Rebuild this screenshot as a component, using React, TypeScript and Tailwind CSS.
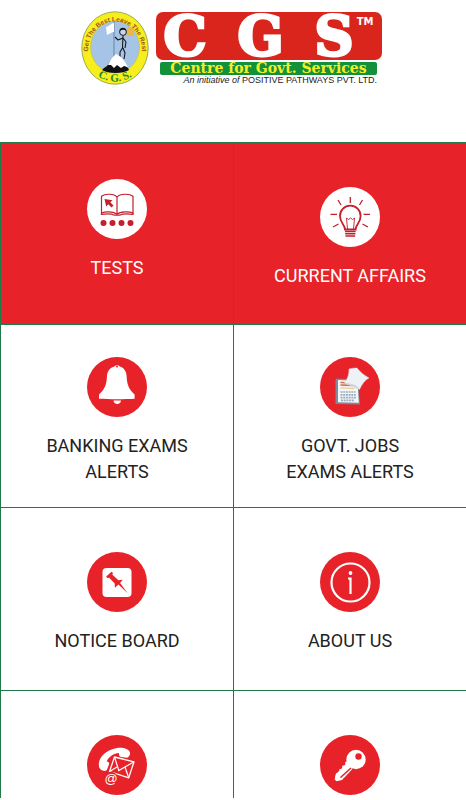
import React from 'react';

const RED = '#e82229';

function Badge() {
  return (
    <svg viewBox="0 0 68 74" className="w-[68px] h-[74px] shrink-0" role="img" aria-label="CGS emblem">
      <defs>
        <path id="motto" d="M 7.5 45 A 27 29 0 1 1 60.5 45" />
        <path id="initials" d="M 6 53 A 32 34 0 0 0 62 53" />
      </defs>
      <ellipse cx="34" cy="37" rx="33.2" ry="36.2" fill="#f6ee1d" stroke="#8fa44a" strokeWidth="0.9" />
      <ellipse cx="34" cy="36" rx="24.5" ry="26" fill="#a5c4e6" stroke="#c9bf3a" strokeWidth="0.6" />
      <circle cx="49" cy="21" r="4.2" fill="#e9b64a" />
      <path d="M42 20h3M43 25l3-1M52 14l-1 4M54 25l-3-2" stroke="#e9b64a" strokeWidth="1" />
      {/* flag and climber */}
      <path d="M33 11v35" stroke="#5b7391" strokeWidth="0.8" />
      <path d="M33 12c-3 0-4 3-8 4l1 8c3-1 4-3 7-3z" fill="#fff" />
      <circle cx="42" cy="21" r="3.4" fill="#c2d8f0" stroke="#151515" strokeWidth="1" />
      <path d="M38.5 20c0-4 6-4.500 7-.5-2-1-4-1-7 .5z" fill="#151515" />
      <path d="M42 25l-.5 12M34 26l3 3 5-2 3 4-1 6M41.500 37l-2.500 4v7M42 37l2 5-1 6" fill="none" stroke="#151515" strokeWidth="1.100" strokeLinejoin="round" />
      <path d="M23 57l3-2 3-4 5-4 5 2 4 5 4 3 1 2c-6 4-21 4-27 0z" fill="#111" />
      <path d="M27 54l4-7 4-4 5 3 4 5 3 5-4-1-3 2-4-3-3 3-3-3z" fill="#fff" />
      <text fontSize="6.5" fontWeight="700" fontFamily="Liberation Sans, sans-serif" fill="#a4521c">
        <textPath href="#motto" startOffset="50%" textAnchor="middle">Get The Best Leave The Rest</textPath>
      </text>
      <text fontSize="11" fontWeight="700" fontFamily="Liberation Serif, serif" fill="#24862a">
        <textPath href="#initials" startOffset="50%" textAnchor="middle">C. G. S.</textPath>
      </text>
    </svg>
  );
}

function Logo() {
  return (
    <div className="flex gap-[7px]">
      <Badge />
      <div className="flex flex-col items-center w-[226px] pt-px whitespace-nowrap">
        <h1 className="relative w-full h-12 rounded-[7px] bg-[#da251d] flex justify-between pl-2 pr-7 text-white text-[54px] leading-[48px] font-bold font-['DejaVu_Serif',serif] [-webkit-text-stroke:3px_white]">
          <span>C</span>
          <span>G</span>
          <span>S</span>
          <span className="absolute top-1 right-2 text-[10px] leading-[12px] font-['DejaVu_Sans',sans-serif] [-webkit-text-stroke:0]">TM</span>
        </h1>
        <p className="mt-[2px] w-[217px] h-[13px] rounded-[2px] bg-[#12903a] text-[#f4ee2a] text-center text-[14px] leading-[13px] font-bold font-['DejaVu_Serif',serif]">
          Centre for Govt. Services
        </p>
        <p className="w-[217px] text-right text-[#222] text-[9px] leading-[10px] font-['Liberation_Sans',sans-serif]">
          <i>An initiative of</i> POSITIVE PATHWAYS PVT. LTD.
        </p>
      </div>
    </div>
  );
}

function TestsIcon() {
  return (
    <svg viewBox="0 0 60 60" fill="none" stroke="#c41f2b" strokeWidth="1.2">
      <path d="M30 18c-3-3.500-12-3.500-15.500-.8v16.800c4-1.600 12-1.600 15.500 1.200 3.500-2.800 12-2.800 16-1.200V17.200C42.500 14.500 33 14.500 30 18zM30 18v17" />
      <path d="M14.500 34v1.400c5-.8 10-.6 13 .8h5c3-1.400 8.500-1.600 13.500-.8V34" />
      <path d="M17.500 20l8 1.300-2.200 2 3.200 3.200-2 2-3.200-3.200-2.100 2.200z" fill="#c41f2b" stroke="none" />
      <g fill="#c41f2b" stroke="none">
        <circle cx="16.500" cy="44" r="3" />
        <circle cx="25.500" cy="44" r="3" />
        <circle cx="34.500" cy="44" r="3" />
        <circle cx="43.500" cy="44" r="3" />
      </g>
    </svg>
  );
}

function BulbIcon() {
  return (
    <svg viewBox="0 0 60 60" fill="none" stroke="#c41f2b" strokeWidth="1.3">
      <path d="M25 42.500c0-5-5-6.500-5-13.500a10.300 10.300 0 0 1 20.600 0c0 7-5 8.500-5 13.500z" strokeWidth="1.800" />
      <path d="M27.500 42l-1-11 2 1.500 2-1.500 2 1.500 2-1.500-1 11" strokeWidth="0.900" />
      <path d="M25 44.500h10.600M25.200 46.700h10.200M25.500 48.900h9.600" strokeWidth="1.500" />
      <path d="M30.300 10v6M18 13l3 5M42.500 13l-3 5M10.500 27.300H17M43.500 27.300H50M13 40l5.500-3M48 40l-5.500-3" />
    </svg>
  );
}

function BellIcon() {
  return (
    <svg viewBox="0 0 60 60" fill="#fff">
      <path d="M27.500 9.500a3 3 0 0 1 5.200 0c4.300 1.200 6.600 5 6.900 9.500.5 9 2 13 8 18.500v4.200c-11 .6-24.500.6-35.600 0v-4.200c6-5.500 7.500-9.500 8-18.500.3-4.500 2.700-8.300 7.500-9.500z" />
      <circle cx="30" cy="9.500" r="1" fill={RED} />
      <path d="M26.500 43.500h7.500c0 4.500-7.500 4.500-7.500 0z" />
    </svg>
  );
}

function CalendarIcon() {
  return (
    <svg viewBox="0 0 60 60">
      <path d="M15.500 23l1-1.500 21 1 2.500 25-24.500-.5z" fill="#7b8a9c" />
      <path d="M18 23l19.500.8 1.300 22-20.800-.5z" fill="#f3f5f8" />
      <path d="M20.500 25.500l11 .5M20.500 28l12 .4" stroke="#d96a4a" strokeWidth="1.600" />
      <path d="M20.500 31l14 .4" stroke="#e9bd72" strokeWidth="0.900" />
      <path d="M20.500 35h15M20.500 37.800h15.200M20.500 40.600h15.400M21 43.400h13" stroke="#9aabbe" strokeWidth="1.700" strokeDasharray="2 0.700" />
      <path d="M29 12c3-1 6-1 8-1 3 4 7 7 12 10-4 2-7 6-9.500 11.500-4.500-3-9.500-3.500-15-6.500 3.500-5 4.500-9 4.500-14z" fill="#eef1f6" stroke="#cbd3df" strokeWidth="0.500" />
      <path d="M24.500 26c4 .2 8 1 11 2.300 1.500.8 3 2.200 4 4.200-4.500-3-9.500-3.500-15-6.500z" fill="#cbd3df" />
    </svg>
  );
}

function PinIcon() {
  return (
    <svg viewBox="0 0 60 60">
      <rect x="15.500" y="16" width="29" height="29" rx="4" fill="#fff" />
      <path d="M24.500 19.700l1.500 1.300-.6 1.700 6.100 5.600 4.300-.5-2.700 3.200 7.600 10.200-9.300-8.700-3.500 3.300-.2-4.300-5.500-5.800-2 .4-1-1.600z" fill={RED} />
    </svg>
  );
}

function InfoIcon() {
  return (
    <svg viewBox="0 0 60 60" fill="none" stroke="#fff">
      <circle cx="30.500" cy="30.500" r="19" strokeWidth="2.200" />
      <circle cx="30.500" cy="21" r="1.900" fill="#fff" stroke="none" />
      <path d="M28 26.500h2.500V42" strokeWidth="2.200" />
    </svg>
  );
}

function ContactIcon() {
  return (
    <svg viewBox="0 0 60 60">
      <path d="M12 31.500c-1.500-8 6-16.500 18-18.500 6-1 12 1 13 4.500.5 2-1 5-3 5.300l-6-.7c-2-.4-2-2-2-4.100-5.500.3-10 3.500-12.300 8.300 2 .5 2.800 1.700 2.300 3.200l-2.200 5.500c-1.600 2.200-7.300.2-7.800-3.500z" fill="#fff" />
      <path d="M27.500 22l19.500 4.800-5.300 16-19.200-6.300z" fill={RED} stroke="#fff" strokeWidth="1.300" strokeLinejoin="round" />
      <path d="M27.500 22l4.300 13.500L47 26.800M22.500 36.500l7.500-4.500M41.700 42.800L38 32" fill="none" stroke="#fff" strokeWidth="1.200" />
      <circle cx="24" cy="43" r="6.300" fill={RED} />
      <text x="24" y="47.500" fontSize="13" textAnchor="middle" fill="#fff" fontFamily="Liberation Sans, sans-serif">@</text>
    </svg>
  );
}

function KeyIcon() {
  return (
    <svg viewBox="0 0 60 60">
      <path d="M28 27L16 39l-1.300 5.500 1.800 1.800L22 45l10-10.500z" fill="#fff" />
      <circle cx="36" cy="24.500" r="9.700" fill="#fff" />
      <path d="M28 25.500l-3 2 .5 2.800-3.300.4.300 3-3.200.5.200 3-3.500 1.200-1.200 6 3.800.5L33 33z" fill="#fff" />
      <circle cx="38.500" cy="21.500" r="3.200" fill={RED} />
      <path d="M31 33L20.500 42.500" stroke={RED} strokeWidth="1.600" />
    </svg>
  );
}

const tiles = [
  { name: 'Tests', label: 'TESTS', icon: <TestsIcon />, red: true, cell: 'pt-9' },
  { name: 'Current Affairs', label: 'CURRENT AFFAIRS', icon: <BulbIcon />, red: true, cell: 'pt-11' },
  { name: 'Banking Exams Alerts', label: 'BANKING EXAMS ALERTS', icon: <BellIcon />, cell: 'pt-8' },
  { name: 'Govt. Jobs Exams Alerts', label: 'GOVT. JOBS EXAMS ALERTS', icon: <CalendarIcon />, cell: 'pt-8' },
  { name: 'Notice Board', label: 'NOTICE BOARD', icon: <PinIcon />, cell: 'pt-11' },
  { name: 'About Us', label: 'ABOUT US', icon: <InfoIcon />, cell: 'pt-11' },
  { name: 'Contact', icon: <ContactIcon />, cell: 'pt-11' },
  { name: 'Password', icon: <KeyIcon />, cell: 'pt-11' },
];

export default function App() {
  return (
    <div className="h-screen flex flex-col bg-white pb-[2px] font-[Roboto,sans-serif]">
      <header className="h-[142px] shrink-0 flex justify-center items-start pt-[11px] pr-1">
        <Logo />
      </header>

      <nav className="flex-1 min-h-0 overflow-hidden grid grid-cols-2 grid-rows-[182px_183px_183px_183px]">
        {tiles.map((tile) => (
          <a
            key={tile.name}
            href="#"
            aria-label={tile.name}
            className={`${tile.cell} border-t border-l border-[#1f7a48] flex flex-col items-center gap-4 ${
              tile.red ? 'bg-[#e82229] text-white' : 'text-[#222]'
            }`}
          >
            <span className={`size-[60px] shrink-0 rounded-full ${tile.red ? 'bg-white' : 'bg-[#e82229]'}`}>
              {tile.icon}
            </span>
            {tile.label && <span className="max-w-[160px] text-center text-[18px] leading-[26px]">{tile.label}</span>}
          </a>
        ))}
      </nav>
    </div>
  );
}
